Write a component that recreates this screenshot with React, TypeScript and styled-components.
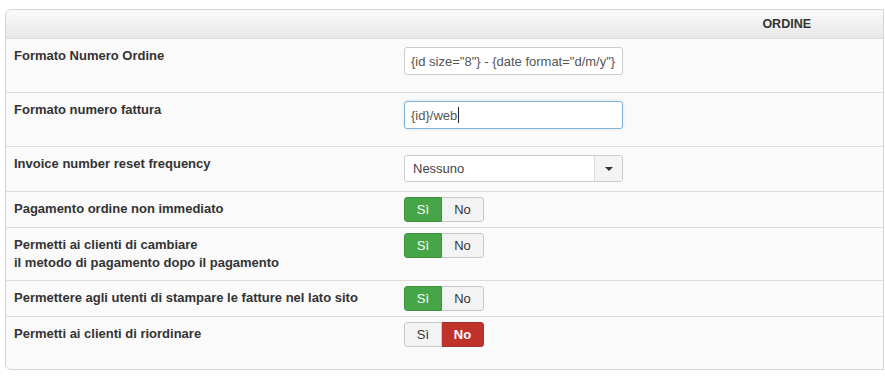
import React from "react";
import styled, { createGlobalStyle, css } from "styled-components";

const GlobalStyle = createGlobalStyle`
  html, body { margin: 0; padding: 0; background: #ffffff; }
  body {
    font-family: "Liberation Sans", Arial, Helvetica, sans-serif;
    font-size: 13px;
    color: #333333;
  }
  * { box-sizing: border-box; }
`;

const Page = styled.div`
  padding: 9px 1px 0 5px;
`;

const Panel = styled.section`
  border: 1px solid #d4d4d4;
  border-radius: 6px 0 0 6px;
  background: #fafafa;
  overflow: hidden;
  padding-bottom: 17px;
`;

const Header = styled.div`
  height: 29px;
  display: flex;
  align-items: center;
  justify-content: flex-end;
  padding-right: 72px;
  background: linear-gradient(#fafafa, #e8e8e8);
  border-bottom: 1px solid #dddddd;
  font-weight: bold;
  font-size: 12.5px;
  color: #333333;
`;

const Row = styled.div<{ $last?: boolean }>`
  display: grid;
  grid-template-columns: 390px 1fr;
  align-items: start;
  padding: 5px 8px;
  border-bottom: ${(p) => (p.$last ? "none" : "1px solid #dddddd")};
`;

const Label = styled.div`
  font-weight: bold;
  line-height: 18px;
  padding: 3px 0 3px;
  color: #333333;
`;

const fieldBox = css`
  width: 219px;
  border: 1px solid #cccccc;
  border-radius: 3px;
  background: #ffffff;
  color: #555555;
  font-family: inherit;
  font-size: 13px;
`;

const TextField = styled.div<{ $focused?: boolean }>`
  ${fieldBox};
  height: 28px;
  margin: 3px 0 12px;
  padding: 0 6px;
  display: flex;
  align-items: center;
  white-space: nowrap;
  overflow: hidden;
  ${(p) =>
    p.$focused &&
    css`
      border-color: #7fb0d6;
      box-shadow: 0 0 3px rgba(82, 168, 236, 0.25);
    `}
`;

const Caret = styled.span`
  display: inline-block;
  width: 1px;
  height: 16px;
  background: #222222;
  margin-left: 1px;
`;

const Select = styled.div`
  ${fieldBox};
  height: 27px;
  margin: 3px 0 4px;
  display: flex;
  align-items: stretch;
  color: #444444;
  overflow: hidden;
`;

const SelectValue = styled.span`
  flex: 1;
  display: flex;
  align-items: center;
  padding-left: 8px;
`;

const SelectArrow = styled.span`
  width: 28px;
  border-left: 1px solid #dcdcdc;
  background: #f4f4f4;
  display: flex;
  align-items: center;
  justify-content: center;
  &::after {
    content: "";
    border-left: 4px solid transparent;
    border-right: 4px solid transparent;
    border-top: 4px solid #333333;
    margin-top: 1px;
  }
`;

const Toggle = styled.div`
  display: inline-flex;
  height: 25px;
  border-radius: 3px;
  overflow: hidden;
`;

type Tone = "yes" | "no" | "off";

const ToggleButton = styled.span<{ $tone: Tone; $w: number; $side: "l" | "r" }>`
  width: ${(p) => p.$w}px;
  display: flex;
  align-items: center;
  justify-content: center;
  font-size: 13px;
  border: 1px solid #c8c8c8;
  ${(p) => (p.$side === "l" ? "border-radius: 3px 0 0 3px;" : "border-radius: 0 3px 3px 0; border-left: none;")}
  ${(p) =>
    p.$tone === "yes"
      ? css`
          background: #46a546;
          border-color: #3c923c;
          color: #ffffff;
        `
      : p.$tone === "no"
      ? css`
          background: #c0322c;
          border-color: #a8312b;
          color: #ffffff;
          font-weight: bold;
        `
      : css`
          background: #f3f3f3;
          color: #333333;
        `}
`;

const YesNo = ({ value }: { value: boolean }) => (
  <Toggle>
    <ToggleButton $side="l" $w={38} $tone={value ? "yes" : "off"}>
      Sì
    </ToggleButton>
    <ToggleButton $side="r" $w={42} $tone={value ? "off" : "no"}>
      No
    </ToggleButton>
  </Toggle>
);

export default function App() {
  return (
    <Page>
      <GlobalStyle />
      <Panel>
        <Header>ORDINE</Header>
        <Row>
          <Label>Formato Numero Ordine</Label>
          <div>
            <TextField role="textbox">{'{id size="8"} - {date format="d/m/y"}'}</TextField>
          </div>
        </Row>
        <Row>
          <Label>Formato numero fattura</Label>
          <div>
            <TextField role="textbox" $focused>
              {"{id}/web"}
              <Caret aria-hidden />
            </TextField>
          </div>
        </Row>
        <Row>
          <Label>Invoice number reset frequency</Label>
          <div>
            <Select role="combobox">
              <SelectValue>Nessuno</SelectValue>
              <SelectArrow />
            </Select>
          </div>
        </Row>
        <Row>
          <Label>Pagamento ordine non immediato</Label>
          <div>
            <YesNo value />
          </div>
        </Row>
        <Row>
          <Label>
            Permetti ai clienti di cambiare
            <br />
            il metodo di pagamento dopo il pagamento
          </Label>
          <div>
            <YesNo value />
          </div>
        </Row>
        <Row>
          <Label>Permettere agli utenti di stampare le fatture nel lato sito</Label>
          <div>
            <YesNo value />
          </div>
        </Row>
        <Row $last>
          <Label>Permetti ai clienti di riordinare</Label>
          <div>
            <YesNo value={false} />
          </div>
        </Row>
      </Panel>
    </Page>
  );
}
